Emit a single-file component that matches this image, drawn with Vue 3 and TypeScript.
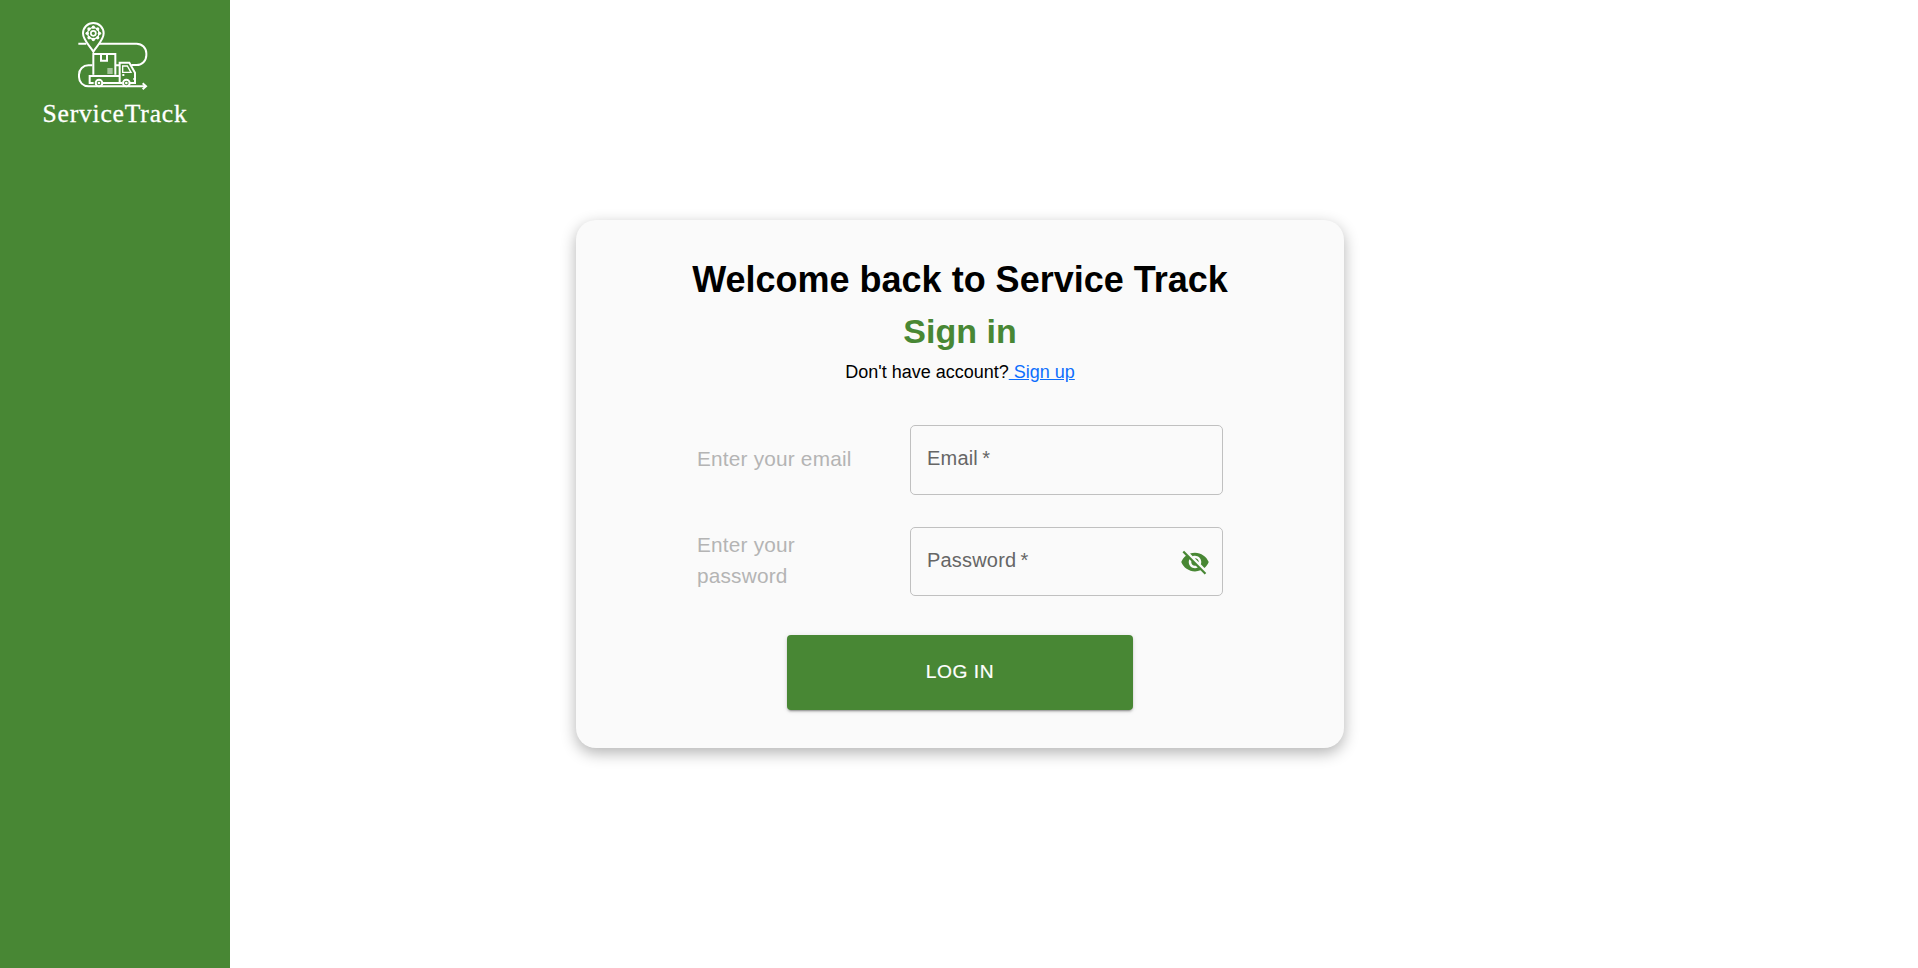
<script setup lang="ts">
import { ref } from 'vue'

const email = ref('')
const password = ref('')
const passwordVisible = ref(false)

const petals: number[] = [0, 45, 90, 135, 180, 225, 270, 315]
</script>

<template>
  <div class="layout">
    <aside class="sidebar">
      <svg class="logo" viewBox="0 0 252 240" fill="none" stroke="#fff" stroke-width="6">
        <path d="M25 86H49M86 86H200A29 29 0 0 1 229 115V121A29 29 0 0 1 200 150H184" />
        <path d="M67 151H55A28 28 0 0 0 27 179V186A28 28 0 0 0 55 214H226" />
        <path d="M218 205L228 214L218 223" />
        <path d="M70 110C60 92 39 76 39 55A31 31 0 0 1 101 55C101 76 80 92 70 110Z" />
        <g stroke-width="4">
          <circle cx="70" cy="55" r="17" />
          <circle cx="70" cy="55" r="7.500" stroke-width="5" />
        </g>
        <g fill="#fff" stroke="none">
          <circle
            v-for="angle in petals"
            :key="angle"
            cx="70"
            cy="36.500"
            r="5"
            :transform="`rotate(${angle} 70 55)`"
          />
        </g>
        <path d="M70 179V117H136V179M93 119V137H111V119" />
        <path d="M112 162H128M112 168H128M112 174H128" stroke-width="3.500" />
        <path d="M71 204H59V183H148M97 204H156M178 204H195V173L178 143H149V204M138 151H149" />
        <path d="M158 153H172L183 172H158Z" stroke-width="4" />
        <path d="M157 180H163M190 192H196" />
        <g fill="#488734">
          <circle cx="87" cy="204" r="10" />
          <circle cx="169" cy="204" r="10" />
        </g>
        <g fill="#fff" stroke="none">
          <circle cx="87" cy="204" r="4" />
          <circle cx="169" cy="204" r="4" />
        </g>
      </svg>
      <span class="brand">ServiceTrack</span>
    </aside>

    <main class="content">
      <form class="card" @submit.prevent>
        <h1 class="title">Welcome back to Service Track</h1>
        <h2 class="subtitle">Sign in</h2>
        <p class="signup">Don't have account?<a href="#"> Sign up</a></p>

        <div class="row">
          <span class="hint">Enter your email</span>
          <label class="field">
            <span class="label">Email&#8201;*</span>
            <input v-model="email" type="email" />
          </label>
        </div>
        <div class="row row-password">
          <span class="hint">Enter your password</span>
          <label class="field">
            <span class="label">Password&#8201;*</span>
            <input v-model="password" :type="passwordVisible ? 'text' : 'password'" />
            <svg class="eye" viewBox="0 0 24 24" @click.prevent="passwordVisible = !passwordVisible">
              <path
                d="M12 7c2.760 0 5 2.240 5 5 0 .650-.130 1.260-.360 1.830l2.920 2.920c1.510-1.260 2.700-2.890 3.430-4.750-1.730-4.390-6-7.500-11-7.500-1.400 0-2.740.250-3.980.700l2.160 2.160C10.740 7.130 11.350 7 12 7zM2 4.270l2.280 2.280.460.460C3.080 8.300 1.780 10.020 1 12c1.730 4.390 6 7.500 11 7.500 1.550 0 3.030-.300 4.380-.840l.420.420L19.730 22 21 20.730 3.270 3 2 4.270zM7.530 9.800l1.550 1.550c-.050.210-.080.430-.080.650 0 1.660 1.340 3 3 3 .220 0 .440-.030.650-.080l1.550 1.550c-.670.330-1.410.530-2.200.530-2.760 0-5-2.240-5-5 0-.790.200-1.530.530-2.200zm4.310-.780l3.150 3.150.020-.160c0-1.660-1.340-3-3-3l-.170.010z"
              />
            </svg>
          </label>
        </div>

        <button class="login" type="submit">LOG IN</button>
      </form>
    </main>
  </div>
</template>

<style>
body {
  margin: 0;
}
</style>

<style scoped>
.layout {
  display: flex;
  height: 100vh;
  background: #fff;
  font-family: "Liberation Sans", Arial, sans-serif;
}

.sidebar {
  display: flex;
  flex: none;
  flex-direction: column;
  align-items: center;
  box-sizing: border-box;
  width: 230px;
  padding-top: 15px;
  background: #488734;
}

.logo {
  width: 84px;
  height: 80px;
  margin-right: 6px;
}

.brand {
  margin-top: 4px;
  color: #fff;
  font: 25.6px/30px "Liberation Serif", "Times New Roman", serif;
  letter-spacing: 0.8px;
  -webkit-text-stroke: 0.3px #fff;
}

/* The right padding keeps the card centred in the window, not in the area beside the sidebar. */
.content {
  display: flex;
  flex: 1;
  align-items: center;
  justify-content: center;
  padding-right: 228px;
}

.card {
  display: flex;
  flex-direction: column;
  align-items: center;
  box-sizing: border-box;
  width: 768px;
  height: 528px;
  padding: 38px 120px;
  border-radius: 20px;
  background: #fafafa;
  box-shadow: 0 5px 15px rgba(0, 0, 0, 0.3);
}

.title {
  margin: 0;
  color: #000;
  font-size: 36px;
  line-height: 44px;
  white-space: nowrap;
}

.subtitle {
  margin: 8px 0 7px;
  color: #488734;
  font-size: 34px;
  line-height: 42px;
}

.signup {
  margin: 0 0 39px;
  font-size: 18px;
  line-height: 27px;
}

.signup a {
  color: #0d6efd;
}

.row {
  display: flex;
  align-items: center;
  justify-content: space-between;
  box-sizing: border-box;
  width: 526px;
  height: 70px;
  margin-bottom: 32px;
}

.row-password {
  height: 69px;
  margin-bottom: 39px;
}

.hint {
  width: 170px;
  padding-bottom: 4px;
  color: #b4b4b4;
  font-size: 20.8px;
  line-height: 31px;
  letter-spacing: 0.00938em;
}

.field {
  display: flex;
  align-items: center;
  box-sizing: border-box;
  width: 313px;
  height: 100%;
  padding: 0 12px 0 16px;
  border: 1px solid #c0c0c0;
  border-radius: 5px;
}

.label {
  padding-bottom: 3px;
  color: #666;
  font-size: 20px;
  letter-spacing: 0.00938em;
  white-space: nowrap;
}

.field input {
  flex: 1;
  min-width: 0;
  padding: 0;
  border: 0;
  outline: 0;
  background: transparent;
  font: inherit;
}

.eye {
  flex: none;
  width: 30px;
  height: 30px;
  fill: #488734;
}

.login {
  flex: none;
  width: 346px;
  height: 75px;
  padding: 0 0 2px;
  border: 0;
  border-radius: 4px;
  background: #488734;
  box-shadow:
    0 3px 1px -2px rgba(0, 0, 0, 0.2),
    0 2px 2px rgba(0, 0, 0, 0.14),
    0 1px 5px rgba(0, 0, 0, 0.12);
  color: #fff;
  font: 19.2px/1.75 "Liberation Sans", Arial, sans-serif;
  letter-spacing: 0.02857em;
  -webkit-text-stroke: 0.2px #fff;
}
</style>
